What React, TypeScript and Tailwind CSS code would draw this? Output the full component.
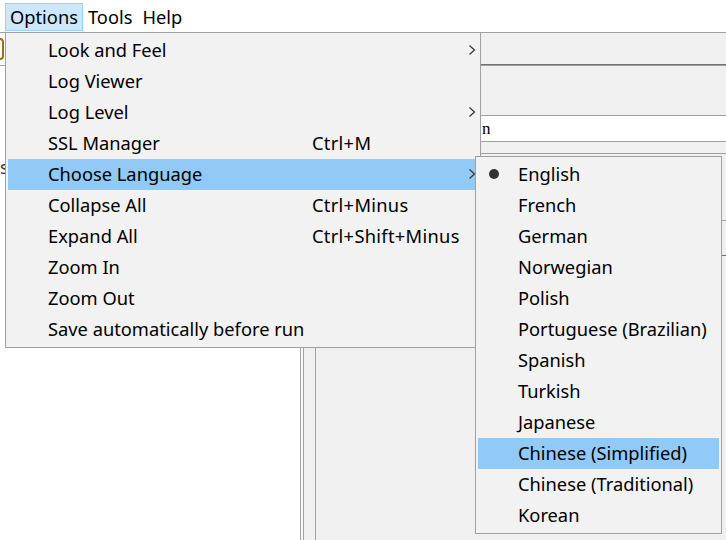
import React from "react";

type Item = { label: string; shortcut?: string; sub?: boolean; active?: boolean };

const mainItems: Item[] = [
  { label: "Look and Feel", sub: true },
  { label: "Log Viewer" },
  { label: "Log Level", sub: true },
  { label: "SSL Manager", shortcut: "Ctrl+M" },
  { label: "Choose Language", sub: true, active: true },
  { label: "Collapse All", shortcut: "Ctrl+Minus" },
  { label: "Expand All", shortcut: "Ctrl+Shift+Minus" },
  { label: "Zoom In" },
  { label: "Zoom Out" },
  { label: "Save automatically before run" },
];

const languages = [
  "English",
  "French",
  "German",
  "Norwegian",
  "Polish",
  "Portuguese (Brazilian)",
  "Spanish",
  "Turkish",
  "Japanese",
  "Chinese (Simplified)",
  "Chinese (Traditional)",
  "Korean",
];

const Chevron = () => (
  <svg width="8" height="12" viewBox="0 0 8 12" className="shrink-0">
    <path d="M1.5 1.5 L6.5 6 L1.5 10.5" fill="none" stroke="#333" strokeWidth="1.2" />
  </svg>
);

const MenuBar = () => (
  <div className="h-[32px] flex items-start pt-[3px] pl-[5px] text-[18.3px] text-black">
    <div className="h-[28px] px-[4px] leading-[26px] border border-[#99d1ff] bg-[#cce8ff]">Options</div>
    <div className="h-[28px] px-[4px] leading-[26px] border border-transparent">Tools</div>
    <div className="h-[28px] px-[4px] leading-[26px] border border-transparent">Help</div>
  </div>
);

const Background = () => (
  <div className="flex flex-col flex-1">
    {/* toolbar */}
    <div className="h-[34px] flex border-t border-b border-[#a0a0a0]">
      <div className="w-[300px] bg-white flex items-start pt-[5px]">
        <div className="ml-[-14px] w-[18px] h-[22px] border-2 border-[#a06a20] rounded-sm" />
      </div>
      <div className="flex-1 bg-[#f0f0f0] border-b border-[#707070]" />
    </div>
    <div className="flex flex-1">
      {/* left tree */}
      <div className="w-[300px] bg-white text-[18px] pt-[89px] text-[#333]">
        <div className="leading-[24px]">s</div>
      </div>
      {/* splitter */}
      <div className="w-[16px] flex">
        <div className="w-[4px] border-l border-r border-[#a0a0a0] bg-[#fafafa]" />
        <div className="flex-1 bg-[#f0f0f0] border-r border-[#a0a0a0]" />
      </div>
      {/* right panel */}
      <div className="flex-1 bg-[#f0f0f0] flex flex-col pt-[49px]">
        <div className="h-[27px] bg-white border-t border-b border-[#a0a0a0] pl-[166px] font-['Liberation_Serif'] text-[17px] leading-[25px]">
          n
        </div>
        <div className="mt-[11px] flex-1 border-t border-[#a0a0a0] flex flex-col">
          <div className="h-[66px]" />
          <div className="h-[35px] border-t border-[#a0a0a0]" />
          <div className="border-t border-[#707070]" />
        </div>
      </div>
    </div>
  </div>
);

const MainMenu = () => (
  <div className="absolute left-[5px] top-[32px] w-[476px] border border-[#a0a0a0] bg-[#f2f2f2] px-[2px] pt-[2px] pb-[2px] text-[18.3px] text-black">
    {mainItems.map((it) => (
      <div
        key={it.label}
        className={`h-[31px] flex items-center pl-[40px] pr-[2px] pb-[2px] ${it.active ? "bg-[#91c9f7]" : ""}`}
      >
        <div className="w-[264px] whitespace-nowrap leading-[29px]">{it.label}</div>
        <div className="flex-1 whitespace-nowrap leading-[29px] tracking-[0.3px]">{it.shortcut}</div>
        {it.sub && <Chevron />}
      </div>
    ))}
  </div>
);

const LanguageMenu = () => (
  <div className="absolute left-[475px] top-[156px] w-[247px] border border-[#a0a0a0] bg-[#f2f2f2] px-[2px] pt-[2px] pb-[2px] text-[18.3px] text-black">
    {languages.map((l, i) => (
      <div
        key={l}
        className={`h-[31px] flex items-center relative pl-[40px] pb-[2px] ${l === "Chinese (Simplified)" ? "bg-[#91c9f7]" : ""}`}
      >
        {i === 0 && (
          <span className="absolute left-[11px] top-[10px] w-[10px] h-[10px] rounded-full bg-[#333]" />
        )}
        <span className="whitespace-nowrap leading-[29px]">{l}</span>
      </div>
    ))}
  </div>
);

export default function App() {
  return (
    <div className="w-[726px] h-[540px] relative overflow-hidden bg-white flex flex-col font-['Noto_Sans',sans-serif]">
      <MenuBar />
      <Background />
      <MainMenu />
      <LanguageMenu />
    </div>
  );
}
